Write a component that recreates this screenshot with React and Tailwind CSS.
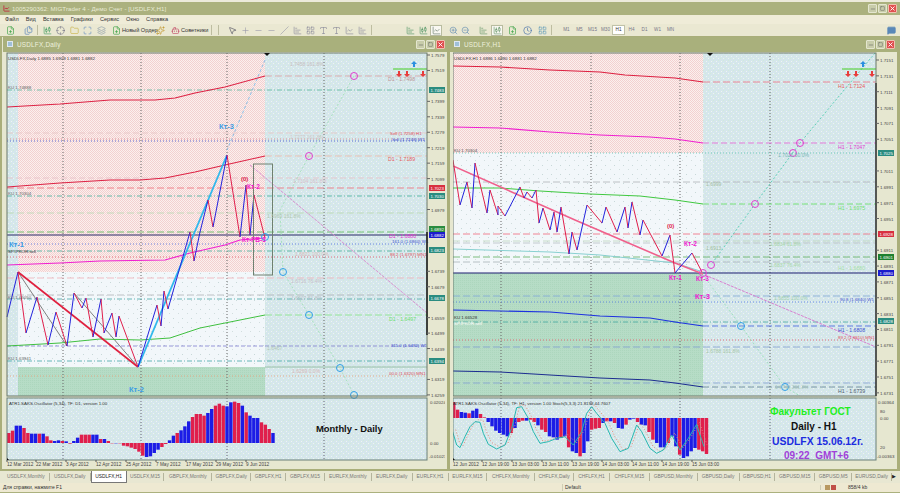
import React from 'react';
import { FilePlus, Files, Crosshair, Folder, Maximize, Layers, Sparkles, Bot, MousePointer2, Plus, Minus, Slash, Type, ChartCandlestick, ChartBar, ChartLine, ZoomIn, ZoomOut, Clock, LayoutGrid, MessageSquare, Minus as Dash, Square, X } from 'lucide-react';

const FONT = '"Liberation Sans", Arial, sans-serif';
const BLUE = '#2222dd';
const RED = '#e01f4c';

// small line helpers, coordinates below are page pixels
const HL = ({ y, c, d, x1 = 7, x2 = 427, w = 1 }) => (
  <line x1={x1} x2={x2} y1={y} y2={y} stroke={c} strokeWidth={w} strokeDasharray={d} opacity={d ? 0.8 : 1} />
);
const PL = ({ p, c, w = 1, d }) => (
  <polyline points={p} fill="none" stroke={c} strokeWidth={w} strokeDasharray={d} strokeLinejoin="round" />
);
const T = ({ x, y, c = '#444', s = 4.4, b, t }) => (
  <text x={x} y={y} fill={c} fontSize={s} fontWeight={b ? 700 : 400} fontFamily={FONT}>{t}</text>
);
const Ring = ({ x, y, c, r = 3.5 }) => <circle cx={x} cy={y} r={r} fill="none" stroke={c} strokeWidth="1" />;
const Tag = ({ x, y, c, t }) => (
  <g>
    <rect x={x} y={y - 3} width="16" height="6" fill={c} />
    <T x={x + 1.5} y={y + 1.8} c="#fff" t={t} />
  </g>
);

const Zig = ({ pts }) =>
  pts.slice(1).map((p, i) => (
    <line key={i} x1={pts[i][0]} y1={pts[i][1]} x2={p[0]} y2={p[1]} strokeWidth="1"
      stroke={p[1] < pts[i][1] ? BLUE : RED} />
  ));

const Patterns = ({ id }) => (
  <defs>
    <pattern id={id + 'pink'} width="2" height="2" patternUnits="userSpaceOnUse">
      <rect width="2" height="2" fill="#fbf0ee" />
      <rect width="1" height="1" fill="#f3d0d0" />
      <rect x="1" y="1" width="1" height="1" fill="#f3d0d0" />
    </pattern>
    <pattern id={id + 'sky'} width="5" height="5" patternUnits="userSpaceOnUse">
      <rect width="5" height="5" fill="#d5e6ec" />
      <rect x="1" y="1" width="1" height="1" fill="#eef6f0" />
      <rect x="3" y="0" width="1" height="1" fill="#d2ecd8" />
      <rect x="0" y="3" width="1" height="1" fill="#d2ecd8" />
      <rect x="3" y="3" width="1" height="1" fill="#eef6f0" />
    </pattern>
    <pattern id={id + 'pale'} width="9" height="9" patternUnits="userSpaceOnUse">
      <rect width="9" height="9" fill="#f2f7fa" />
      <rect x="2" y="3" width="1" height="1" fill="#c8d8d8" />
      <rect x="7" y="7" width="1" height="1" fill="#d2dede" />
    </pattern>
    <pattern id={id + 'grn'} width="2" height="2" patternUnits="userSpaceOnUse">
      <rect width="2" height="2" fill="#b6dcc6" />
      <rect width="1" height="1" fill="#acd6bd" />
    </pattern>
  </defs>
);

const Arrows = ({ x }) => (
  <g>
    <line x1={x} x2={x + 34} y1="69" y2="69" stroke="#44cc22" strokeWidth="1.2" />
    <path d={`M${x + 21} 61 l3 3 h-2 v3 h-2 v-3 h-2 z`} fill="#2b8fe0" />
    {[6, 14, 30].map(o => (
      <path key={o} d={`M${x + o} 77 l3 -3 h-2 v-3 h-2 v3 h-2 z`} fill="#e83c3c" />
    ))}
  </g>
);

const Bars = ({ data, x0, zero, step = 3.83 }) =>
  data.map(([h, c], i) => (
    <rect key={i} x={x0 + i * step} width={step - 0.4} y={h > 0 ? zero - h / 3 : zero} height={Math.abs(h) / 3}
      fill={c === 'b' ? '#1c1ce6' : '#e01f4c'} />
  ));

const dailyBars = [[30,'r'],[37,'r'],[52,'b'],[52,'b'],[45,'r'],[30,'r'],[28,'b'],[28,'b'],[28,'r'],[28,'b'],[20,'r'],[8,'r'],[6,'b'],[8,'b'],[6,'r'],[5,'b'],[-2,'r'],[6,'b'],[16,'b'],[25,'r'],[25,'r'],[25,'r'],[25,'b'],[25,'b'],[12,'r'],[12,'b'],[6,'r'],[-1,'r'],[-1,'b'],[-1,'r'],[-8,'r'],[-10,'r'],[-14,'r'],[-18,'r'],[-26,'r'],[-38,'r'],[-42,'b'],[-40,'b'],[-30,'b'],[-20,'b'],[-12,'r'],[-3,'r'],[8,'b'],[22,'b'],[30,'r'],[38,'b'],[50,'b'],[65,'b'],[78,'r'],[87,'r'],[87,'r'],[82,'r'],[90,'b'],[102,'b'],[112,'r'],[118,'r'],[112,'r'],[110,'b'],[122,'b'],[124,'r'],[120,'r'],[112,'b'],[92,'r'],[82,'b'],[75,'b'],[75,'b'],[62,'r'],[55,'r'],[42,'r'],[30,'b']];

const hourBars = [[48,'r'],[25,'r'],[18,'b'],[16,'b'],[14,'r'],[22,'b'],[28,'b'],[12,'r'],[2,'r'],[-12,'b'],[-25,'b'],[-38,'b'],[-45,'b'],[-50,'b'],[-55,'b'],[-45,'r'],[-30,'b'],[-12,'r'],[-8,'r'],[-8,'b'],[-5,'r'],[-12,'r'],[-22,'b'],[-35,'r'],[-42,'r'],[-55,'b'],[-58,'b'],[-65,'b'],[-60,'r'],[-55,'b'],[-88,'r'],[-100,'b'],[-105,'b'],[-115,'r'],[-105,'b'],[-70,'b'],[-35,'r'],[-32,'r'],[-30,'r'],[-15,'b'],[-10,'r'],[-10,'b'],[-15,'r'],[-30,'b'],[-32,'b'],[-20,'r'],[-5,'b'],[-2,'b'],[-12,'r'],[-20,'b'],[-22,'b'],[-42,'r'],[-65,'r'],[-75,'b'],[-88,'b'],[-88,'b'],[-75,'r'],[-55,'b'],[-85,'b'],[-110,'r'],[-120,'b'],[-115,'b'],[-100,'b'],[-90,'b'],[-95,'r'],[-100,'r'],[-108,'r']];

const dailyZig = [[7,317],[18,272],[26,333],[37,297],[48,345],[56,312],[67,346],[74,293],[82,308],[86,298],[93,337],[101,299],[104,333],[112,313],[116,337],[119,316],[138,367],[157,305],[161,326],[164,291],[168,309],[190,232],[194,261],[200,232],[208,200],[213,227],[227,155],[240,237],[246,185],[250,235],[254,195],[265,238]];

const hourZig = [[453,160],[460,205],[467,182],[472,208],[475,163],[487,213],[490,190],[498,215],[498,206],[505,216],[520,187],[524,198],[527,192],[532,198],[536,190],[539,223],[543,208],[550,230],[554,212],[557,232],[561,207],[569,254],[572,232],[577,250],[587,205],[602,223],[606,207],[617,232],[625,207],[628,228],[632,202],[640,235],[643,220],[662,256],[670,235],[675,273],[692,253],[702,272]];

const stochPts = [[8,110],[20,150],[30,158],[45,125],[60,95],[75,80],[90,82],[100,115],[115,148],[140,162],[165,150],[185,100],[200,38],[215,35],[235,70],[250,110],[270,145],[295,140],[320,130],[345,125],[370,150],[395,110],[410,55],[425,35],[440,55],[465,85],[485,130],[510,170],[535,160],[560,90],[575,110],[600,160],[620,175],[640,165],[665,120],[690,165],[715,130],[740,88],[750,120],[762,155]];
const stoch = stochPts.map(([x, y]) => `${450 + x / 3},${395 + y / 3}`).join(' ');
const stochSignal = stochPts.map(([x, y]) => `${453 + x / 3},${393 + y / 3}`).join(' ');

const dailyDates = [['12 Mar 2012',7],['22 Mar 2012',36],['3 Apr 2012',66],['12 Apr 2012',96],['25 Apr 2012',126],['7 May 2012',156],['17 May 2012',186],['29 May 2012',216],['9 Jun 2012',246]];
const hourDates = [['12 Jun 2012',453],['12 Jun 19:00',482],['13 Jun 03:00',512],['13 Jun 11:00',542],['13 Jun 19:00',572],['14 Jun 03:00',602],['14 Jun 11:00',632],['14 Jun 19:00',662],['15 Jun 03:00',692]];

// current price tags, they sit on top of the axis labels
const dailyTags = [[90,'#2a8c80','1.7483'],[188,'#d83040','1.7023'],[196,'#2a8c80','1.7030'],[229,'#2a8c40','1.6892'],[235,'#1c1ccc','1.6882'],[250,'#2a8c80','1.6823'],[298,'#2a8c80','1.6678'],[361,'#2a8c80','1.6394']];
const hourTags = [[153,'#2a8c80','1.7025'],[234,'#d83040','1.6928'],[257,'#1e8030','1.6901'],[273,'#1c1ccc','1.6880'],[321,'#2a8c80','1.6828']];
const clear = tags => ([, y]) => !tags.some(([ty]) => Math.abs(ty - (y - 2)) < 6);

const dailyPrices = Array.from({ length: 23 }, (_, i) => [(1.7579 - i * 0.006).toFixed(4), 57 + i * 15.45]).filter(clear(dailyTags));
const hourPrices = Array.from({ length: 22 }, (_, i) => [(1.7151 - i * 0.002).toFixed(4), 62 + i * 15.85]).filter(clear(hourTags));

const DailyChart = () => (
  <svg viewBox="6 52 439 417" width="439" height="417" className="block">
    <Patterns id="d" />
    <rect x="7" y="53" width="420" height="343" fill="url(#dsky)" />
    <rect x="18" y="53" width="247" height="219" fill="url(#dpink)" />
    <rect x="18" y="272" width="247" height="95" fill="url(#dpale)" />
    <rect x="18" y="367" width="247" height="29" fill="url(#dgrn)" />
    <rect x="7" y="398" width="420" height="62" fill="url(#dsky)" />

    {[63, 141, 227, 324].map(x => (
      <g key={x}>
        <line x1={x} x2={x} y1="53" y2="396" stroke="#666" strokeDasharray="1 2" />
        <line x1={x} x2={x} y1="398" y2="460" stroke="#667" strokeDasharray="1 2" />
      </g>
    ))}

    <HL y="90" c="#5cb8a0" d="5 2 1 2" />
    <HL y="133" c="#e8c4c4" d="6 3" />
    <HL y="139" c="#d8808c" d="1 2" />
    <HL y="141" c="#3c50d0" d="1 2" />
    <HL y="178" c="#e8c0c8" d="6 3" />
    <HL y="188" c="#f06c78" d="7 3" />
    <HL y="196" c="#44b09c" d="5 2 1 2" />
    <HL y="213" c="#b8d8b0" d="7 3" />
    <HL y="232" c="#58b858" d="7 3" />
    <HL y="235" c="#2a2a68" />
    <HL y="244" c="#4c6ce0" d="1 2" />
    <HL y="251" c="#44b09c" d="5 2 1 2" />
    <HL y="257" c="#e05060" d="1 2" />
    <HL y="278" c="#f0b0b8" d="7 3" />
    <HL y="295" c="#b0b4b8" d="7 3" />
    <HL y="299" c="#48a8a8" d="5 2 1 2" />
    <HL y="346" c="#8080d0" d="4 2" />
    <HL y="361" c="#44a8a8" d="5 2 1 2" />
    <HL y="367" c="#98c0a8" x1="265" />
    <HL y="376" c="#e8a078" d="1 2" />

    <PL p="265,60 227,150" c="#8cc0e8" d="3 2" />
    <PL p="354,76 309,156 280,210 283,272 309,315 340,368 354,395" c="#a8e0c0" d="2 2" />
    <PL p="250,165 427,313" c="#d890d0" d="3 1" />
    <PL p="18,272 67,346" c="#808080" />
    <PL p="74,293 138,367" c="#808080" />

    <PL p="7,107 60,104 110,100 155,100 175,98 195,93 225,87 265,76" c="#dd2244" w="1.1" />
    <HL y="76" x1="265" c="#d8a0a0" d="7 3" />
    <PL p="7,187 60,183 110,180 140,180 165,178 195,172 225,165 265,156" c="#dd2244" w="1.1" />
    <HL y="156" x1="265" c="#ecb8a8" d="7 3" />
    <PL p="7,265 60,263 100,261 165,260 190,253 225,245 240,240 265,238" c="#f020d0" w="1.1" />
    <PL p="7,346 60,343 100,339 140,340 170,338 200,328 225,323 265,315" c="#40c040" w="1" />
    <HL y="315" x1="265" c="#88e888" d="7 3" />

    <PL p="18,272 138,367" c="#e0203f" w="1.6" />
    <PL p="138,367 227,155" c="#30b8ec" w="1.8" />
    <Zig pts={dailyZig} />
    <rect x="253.5" y="164" width="19" height="111" fill="none" stroke="#708070" />

    <Ring x="354" y="76" c="#e040d0" />
    <Ring x="309" y="156" c="#e040d0" />
    {[[265, 237], [283, 272], [309, 315], [340, 368], [354, 395]].map(([x, y]) => (
      <Ring key={x} x={x} y={y} c="#30a0e8" />
    ))}
    <Arrows x={393} />

    <T x="8" y="60" c="#333" t="USDLFX,Daily  1.6885 1.6909 1.6881 1.6882" />
    <T x="8" y="89" c="#666" t="KU 1.74888" />
    <T x="8" y="195" c="#666" t="KU 1.70304" />
    <T x="8" y="299" c="#666" t="KU 1.65050" />
    <T x="8" y="360" c="#666" t="KU 1.63941" />
    <T x="219" y="129" c="#3c9ce4" s="7.5" b t="Кт-3" />
    <T x="129" y="392" c="#3c9ce4" s="7.5" b t="Кт-2" />
    <T x="9" y="247" c="#3c9ce4" s="7.5" b t="Кт-1" />
    <T x="8" y="253" c="#333" s="4.4" t="SP.IPKOR.sell" />
    <T x="241" y="181" c="#e01f4c" s="6" b t="(0)" />
    <T x="247" y="189" c="#f020d0" s="6.5" b t="Кт-2" />
    <T x="242" y="242" c="#f020d0" s="6.5" b t="Кт-FВ-3" />

    <T x="290" y="66" c="#c8c0c0" s="5" t="1.7458  161.8%" />
    <T x="290" y="139" c="#d0c8c8" s="5" t="1.7277  161.8%" />
    <T x="293" y="183" c="#d8c0c8" s="5" t="1.7104  161.8%" />
    <T x="267" y="218" c="#b0c8b0" s="5" t="1.6969  161.8%" />
    <T x="295" y="256" c="#d8b8b8" s="5" t="1.6821  100.0%" />
    <T x="291" y="283" c="#c8c0c8" s="5" t="1.6716  76.4%" />
    <T x="291" y="300" c="#b8c0c8" s="5" t="1.6607  61.8%" />
    <T x="267" y="350" c="#b0c8b8" s="5" t="1.6467" />
    <T x="292" y="373" c="#d8b8b8" s="5" t="1.6269  0.0%" />

    <T x="388" y="81" c="#c09898" s="5.2" t="D1 - 1.7498" />
    <T x="388" y="161" c="#e86060" s="5.2" t="D1 - 1.7189" />
    <T x="390" y="135" c="#e05060" t="Sell (1.7258) H1" />
    <T x="392" y="140.5" c="#3c50d0" t="Sell (1.7248) W1" />
    <T x="389" y="238" c="#e030d0" s="5.2" t="D1 - 1.6880" />
    <T x="392" y="243" c="#3c50d0" t="161.0 (1.6860) W1" />
    <T x="390" y="256" c="#e05060" t="88.2 (1.6797) MN1" />
    <T x="389" y="321" c="#70e070" s="5.2" t="D1 - 1.6497" />
    <T x="391" y="347" c="#3c50d0" t="311.0 (1.6482) W1" />
    <T x="389" y="375" c="#e05060" t="00.0 (1.6320) MN1" />

    <rect x="7" y="53" width="420" height="343" fill="none" stroke="#6a786a" />
    <line x1="427" x2="427" y1="232" y2="335" stroke="#111" strokeWidth="1.4" />
    <path d="M264 53 h6 l-3 3 z" fill="#111" />

    {dailyPrices.map(([t, y]) => (
      <g key={t}>
        <line x1="427" x2="430" y1={y - 2} y2={y - 2} stroke="#666" />
        <T x="431" y={y} t={t} />
      </g>
    ))}
    {dailyTags.map(([y, c, t]) => <Tag key={y} x={429} y={y} c={c} t={t} />)}

    <Bars data={dailyBars} x0={7} zero={443} />
    <rect x="7" y="398" width="420" height="62" fill="none" stroke="#6a8078" />
    <T x="9" y="405" c="#333" t="ATR1.SAKS.Oscillator (5,34), TF: D1, version 1.00" />
    <text x="316" y="432" fontSize="9.4" fontWeight="700" fill="#111" fontFamily={FONT}>Monthly - Daily</text>
    <T x="430" y="404" t="0.02024" />
    <T x="430" y="445" t="0.00" />
    <T x="429" y="458" t="-0.01023" />
    <path d="M7 458 l2 2 h-2 z" fill="#111" />

    {dailyDates.map(([t, x]) => (
      <g key={t}>
        <line x1={x} x2={x} y1="460" y2="462" stroke="#555" />
        <T x={x} y="466" s="4.7" t={t} />
      </g>
    ))}
  </svg>
);

const HourChart = () => (
  <svg viewBox="453 52 442 417" width="442" height="417" className="block">
    <Patterns id="h" />
    <rect x="453" y="53" width="423" height="343" fill="url(#hsky)" />
    <rect x="453" y="53" width="250" height="100" fill="url(#hpink)" />
    <rect x="453" y="153" width="250" height="120" fill="url(#hpale)" />
    <rect x="453" y="273" width="250" height="123" fill="url(#hgrn)" />
    <rect x="453" y="398" width="423" height="62" fill="url(#hsky)" />

    {[501, 591, 680, 770].map(x => (
      <g key={x}>
        <line x1={x} x2={x} y1="53" y2="396" stroke="#666" strokeDasharray="1 2" />
        <line x1={x} x2={x} y1="398" y2="460" stroke="#667" strokeDasharray="1 2" />
      </g>
    ))}

    <HL x1="453" x2="876" y="153" c="#58c0b0" d="1 2" />
    <HL x1="453" x2="876" y="182" c="#b0b4b8" d="7 3" />
    <HL x1="453" x2="876" y="234" c="#f0687c" d="7 3" />
    <HL x1="453" x2="876" y="241" c="#c0d8c0" d="7 3" />
    <HL x1="453" x2="876" y="243" c="#b8c0c4" d="7 3" />
    <HL x1="453" x2="876" y="257" c="#60b060" d="7 3" />
    <HL x1="453" x2="876" y="262" c="#a8b4b8" d="7 3" />
    <HL x1="453" x2="876" y="273" c="#1c1c70" w="1.2" />
    <HL x1="453" x2="876" y="296" c="#80a8d8" d="7 3" />
    <HL x1="453" x2="876" y="302" c="#4c78e0" d="1 2" />
    <HL x1="453" x2="876" y="322" c="#44a8a0" d="5 2 1 2" />
    <HL x1="453" x2="876" y="340" c="#e85060" d="1 2" />
    <HL x1="453" x2="876" y="347" c="#80a0d0" d="7 3" />
    <HL x1="453" x2="876" y="383" c="#80a0d0" d="7 3" />

    <PL p="453,66 500,67 550,70 600,72 625,75 675,78 703,82" c="#dd1f40" w="1.1" />
    <HL x1="703" x2="876" y="82" c="#f07080" d="7 3" />
    <PL p="453,127 500,128 550,132 600,135 650,137 675,139 703,143" c="#f020d0" w="1.1" />
    <HL x1="703" x2="876" y="143" c="#e860d8" d="6 3" />
    <PL p="453,188 500,188 540,191 590,194 640,196 675,200 703,204" c="#40c840" w="1" />
    <HL x1="703" x2="876" y="204" c="#60e060" d="6 3" />
    <PL p="453,249 550,252 600,255 675,263 700,271" c="#88d0d0" w="1" />
    <PL p="453,310 500,311 550,312 600,316 650,318 675,322 703,326" c="#1c30e0" w="1.1" />
    <HL x1="703" x2="876" y="326" c="#4060e0" d="6 3" />
    <PL p="453,371 500,372 550,375 600,378 650,380 675,383 703,387" c="#1c2c90" w="1" />
    <HL x1="703" x2="876" y="387" c="#608090" d="6 3" />

    <PL p="875,53 800,143 755,204 711,265" c="#60d0b8" d="2 2" />
    <PL p="703,275 741,326 785,387 800,396" c="#a0e0c0" d="2 2" />
    <PL p="705,275 876,347" c="#d880d0" d="3 1" />

    <PL p="453,166 575,220 675,263 703,274" c="#f0608c" w="1.6" />
    <Zig pts={hourZig} />

    {[[800, 143], [793, 153], [755, 204], [711, 265], [703, 273]].map(([x, y]) => (
      <Ring key={x} x={x} y={y} c="#e040d0" />
    ))}
    <Ring x="741" y="326" c="#30a0e8" />
    <Ring x="785" y="387" c="#30a0e8" />
    <Arrows x={842} />

    <T x="454" y="60" c="#333" t="USDLFX,H1  1.6886 1.6890 1.6881 1.6882" />
    <T x="454" y="152" c="#555" t="KU 1.70304" />
    <T x="454" y="319" c="#333" t="KU 1.66528" />
    <T x="454" y="324.5" c="#fff" t="SP.IPKOR.sell" />
    <T x="667" y="228" c="#e01f4c" s="6" b t="(0)" />
    <T x="684" y="246" c="#f020d0" s="6.5" b t="Кт-2" />
    <T x="669" y="280" c="#f020d0" s="6.5" b t="Кт-1" />
    <T x="696" y="281" c="#f020d0" s="6.5" b t="Кт-3" />
    <T x="695" y="299" c="#f020d0" s="7.5" b t="Кт-3" />

    <T x="778" y="157" c="#78b8b8" s="5" t="1.7025  50.0%" />
    <T x="706" y="186" c="#a8c0a8" s="5" t="1.6999" />
    <T x="706" y="250" c="#a0c0a0" s="5" t="1.6913" />
    <T x="770" y="246" c="#a8d8a8" s="5" t="1.6834  61.8%" />
    <T x="770" y="267" c="#a8d8a8" s="5" t="1.6837  76.4%" />
    <T x="774" y="300" c="#a0d0b0" s="5" t="1.6855  100.0%" />
    <T x="706" y="353" c="#a8c8a8" s="5" t="1.6788  161.8%" />
    <T x="775" y="389" c="#a8c8c0" s="5" t="1.6749  261.8%" />

    <T x="838" y="88" c="#e86060" s="5.2" t="H1 - 1.7124" />
    <T x="838" y="149" c="#e040d0" s="5.2" t="H1 - 1.7047" />
    <T x="838" y="210" c="#70e070" s="5.2" t="H1 - 1.6975" />
    <T x="838" y="270" c="#a8e0a8" s="5.2" t="H1 - 1.6880" />
    <T x="840" y="301" c="#3c50d0" t="90.8 (1.6840) W1" />
    <T x="838" y="332" c="#3c50d0" s="5.2" t="H1 - 1.6808" />
    <T x="838" y="339" c="#e05060" t="89.2 (1.6810) MN1" />
    <T x="838" y="393" c="#506070" s="5.2" t="H1 - 1.6739" />

    <rect x="453" y="53" width="423" height="343" fill="none" stroke="#6a786a" />
    <line x1="876" x2="876" y1="83" y2="396" stroke="#333" strokeWidth="1.4" />
    <path d="M707 53 h6 l-3 3 z" fill="#111" />

    {hourPrices.map(([t, y]) => (
      <g key={t}>
        <line x1="876" x2="879" y1={y - 2} y2={y - 2} stroke="#666" />
        <T x="880" y={y} t={t} />
      </g>
    ))}
    {hourTags.map(([y, c, t]) => <Tag key={y} x={878} y={y} c={c} t={t} />)}

    <Bars data={hourBars} x0={452} zero={418} />
    <PL p={stochSignal} c="#e88878" d="1 2" />
    <PL p={stoch} c="#28b8b0" w="1" />
    <rect x="453" y="398" width="423" height="62" fill="none" stroke="#6a8078" />
    <T x="453" y="405" c="#333" t="ATR1.SAKS.Oscillator (5,34), TF: H1, version 1.00  Stoch(5,3,3) 21.8198 44.7607" />
    <text x="770" y="415" fontSize="10" fontWeight="700" fill="#22ee22" fontFamily={FONT}>Факультет ГОСТ</text>
    <text x="791" y="430" fontSize="10" fontWeight="700" fill="#111" fontFamily={FONT}>Daily - H1</text>
    <text x="772" y="445" fontSize="10.4" fontWeight="700" fill="#1c2ce0" fontFamily={FONT}>USDLFX 15.06.12г.</text>
    <text x="784" y="459" fontSize="10" fontWeight="700" fill="#a040d8" fontFamily={FONT} xmlSpace="preserve">09:22  GMT+6</text>
    <T x="878" y="404" t="0.00364" />
    <T x="880" y="413" t="80" />
    <T x="880" y="420" t="0.00" />
    <T x="880" y="449" t="20" />
    <T x="877" y="458" t="-0.00363" />
    <path d="M453 458 l2 2 h-2 z" fill="#111" />

    {hourDates.map(([t, x]) => (
      <g key={t}>
        <line x1={x} x2={x} y1="460" y2="462" stroke="#555" />
        <T x={x} y="466" s="4.7" t={t} />
      </g>
    ))}
  </svg>
);

const WinButtons = () => (
  <div className="flex gap-[1px]">
    <span className="w-[9px] h-[9px] flex items-center justify-center bg-[#c8ccaa] border border-[#e4e6cf] rounded-[1px]"><Dash size={6} color="#555" /></span>
    <span className="w-[9px] h-[9px] flex items-center justify-center bg-[#c8ccaa] border border-[#e4e6cf] rounded-[1px]"><Square size={5} color="#555" /></span>
    <span className="w-[9px] h-[9px] flex items-center justify-center bg-[#e05050] border border-[#f0c0b0] rounded-[1px]"><X size={7} color="#fff" strokeWidth={3} /></span>
  </div>
);

const ChartWindow = ({ title, pad, width, children }) => (
  <div className={`${width} ${pad} flex flex-col bg-[#e6e7d0] border-b border-[#a9ae7a]`}>
    <div className="h-[15px] -ml-[3px] -mr-[2px] flex items-center justify-between pl-[4px] pr-[2px] bg-[#a9b07c] text-[#eef0dc]">
      <div className="flex items-center gap-[4px]">
        <span className="w-[6px] h-[6px] border border-[#dfe8f0] bg-[#9fc0d8]" />
        <span className="text-[6.4px] tracking-[0.2px]">{title}</span>
      </div>
      <WinButtons />
    </div>
    {children}
  </div>
);

const Tool = ({ icon: Icon, c = '#667', active, className = '' }) => (
  <span className={`w-[12px] h-[11px] shrink-0 flex items-center justify-center ${active ? 'bg-white/70 border border-[#b8bca0]' : ''} ${className}`}>
    <Icon size={9} color={c} strokeWidth={1.6} />
  </span>
);
const Sep = () => <span className="w-[1px] h-[10px] mx-[3px] shrink-0 bg-[#bdbda0]" />;

const periods = ['M1', 'M5', 'M15', 'M30', 'H1', 'H4', 'D1', 'W1', 'MN'];
const menu = ['Файл', 'Вид', 'Вставка', 'Графики', 'Сервис', 'Окно', 'Справка'];
const tabs = [['USDLFX,Monthly',47],['USDLFX,Daily',41],['USDLFX,H1',36],['USDLFX,M15',38],['GBPLFX,Monthly',48],['GBPLFX,Daily',39],['GBPLFX,H1',35],['GBPLFX,M15',39],['EURLFX,Monthly',47],['EURLFX,Daily',41],['EURLFX,H1',36],['EURLFX,M15',39],['CHFLFX,Monthly',48],['CHFLFX,Daily',39],['CHFLFX,H1',36],['CHFLFX,M15',40],['GBPUSD,Monthly',48],['GBPUSD,Daily',42],['GBPUSD,H1',36],['GBPUSD,M15',40],['GBPUSD,M5',37],['EURUSD,Daily',40]];

export default function App() {
  return (
    <div className="w-[900px] h-[493px] overflow-hidden flex flex-col bg-[#ece9d6] text-[#333]" style={{ fontFamily: FONT }}>
      {/* Title bar */}
      <div className="h-[2px] bg-[#eceadb]" />
      <div className="h-[13px] flex items-center justify-between pl-[3px] pr-[3px] bg-[#abb17e] text-[#e8ebd4]">
        <div className="flex items-center gap-[2px]">
          <ChartLine size={7} color="#c03040" strokeWidth={3} />
          <span className="text-[6.2px] tracking-[0.05px]">1005290362: MIGTrader 4 - Демо Счет - [USDLFX,H1]</span>
        </div>
        <WinButtons />
      </div>

      {/* Menu */}
      <div className="h-[9px] flex items-center pl-[5px] gap-[7px] text-[5.6px] text-[#333] bg-[#efecd8]">
        {menu.map(m => <span key={m}>{m}</span>)}
      </div>

      {/* Toolbar */}
      <div className="h-[12px] flex items-center pl-[4px] text-[5.6px] bg-[#eae8d2]">
        <Tool icon={FilePlus} c="#2e9e3a" />
        <Tool icon={Files} c="#4a78b8" className="ml-[6px]" />
        <Sep />
        <div className="flex gap-[1.5px]">
          <Tool icon={ChartCandlestick} c="#3a9a5a" />
          <Tool icon={Crosshair} c="#778" />
          <Tool icon={Folder} c="#c8b040" />
          <Tool icon={Maximize} c="#5a88c0" />
          <Tool icon={Layers} c="#8898a8" />
        </div>
        <Tool icon={FilePlus} c="#2e9e3a" className="ml-[3px]" />
        <span className="w-[32px] shrink-0 whitespace-nowrap">Новый Ордер</span>
        <Tool icon={Sparkles} c="#c09020" />
        <Tool icon={Bot} c="#c04060" className="ml-[3px]" />
        <span className="w-[27px] shrink-0 whitespace-nowrap">Советники</span>
        <Sep />
        <Sep />
        <div className="flex gap-[1px] ml-[4px]">
          <Tool icon={MousePointer2} c="#445" />
          <Tool icon={Plus} c="#99a" />
          <Tool icon={Minus} c="#99a" />
          <Tool icon={Minus} c="#99a" />
          <Tool icon={Slash} c="#99a" />
          <Tool icon={ChartBar} c="#889" />
          <Tool icon={LayoutGrid} c="#889" />
          <Tool icon={Type} c="#889" />
          <Tool icon={Type} c="#889" />
          <Tool icon={ChartLine} c="#889" />
          <Tool icon={ChartBar} c="#889" />
        </div>
        <Sep />
        <div className="flex gap-[1px] ml-[29px]">
          <Tool icon={ChartBar} c="#4a9060" />
          <Tool icon={ChartCandlestick} c="#4a9060" />
          <Tool icon={ChartLine} c="#5a7060" active />
        </div>
        <Tool icon={ZoomIn} c="#5a88b0" className="ml-[5px]" />
        <Tool icon={ZoomOut} c="#5a88b0" />
        <Tool icon={ChartBar} c="#5a9060" className="ml-[6px]" />
        <Tool icon={ChartCandlestick} c="#5a9060" active className="ml-[2px]" />
        <Tool icon={FilePlus} c="#2e9e3a" className="ml-[3px]" />
        <Tool icon={Clock} c="#3a68a8" className="ml-[3px]" />
        <Tool icon={LayoutGrid} c="#5a98b8" className="ml-[3px]" />
        <Sep />
        <div className="flex items-center ml-[5px] text-[4.6px] text-[#778]">
          {periods.map(p => (
            <span key={p} className={`w-[13px] h-[10px] flex items-center justify-center ${p === 'H1' ? 'bg-white border border-[#c0c2a8] text-[#333]' : ''}`}>{p}</span>
          ))}
        </div>
        <span className="ml-auto mr-[4px]"><MessageSquare size={9} color="#5a88b8" fill="#5a88b8" /></span>
      </div>

      {/* Chart windows */}
      <div className="h-[435px] flex items-start gap-[3px] pl-[2px] pt-[1px] bg-[#a9ae7a]">
        <ChartWindow title="USDLFX,Daily" pad="pl-[4px] pr-[2px]" width="w-[445px]">
          <DailyChart />
        </ChartWindow>
        <ChartWindow title="USDLFX,H1" pad="pl-[3px] pr-[2px]" width="w-[447px]">
          <HourChart />
        </ChartWindow>
      </div>

      {/* Tabs */}
      <div className="h-[12px] flex items-center pl-[3px] text-[4.9px] text-[#777] bg-[#e8e7d2]">
        {tabs.map(([t, w]) => (
          <span key={t} style={{ width: w }}
            className={t === 'USDLFX,H1'
              ? 'h-[12px] flex items-center justify-center bg-white border border-[#777] border-t-0 rounded-b-[1px] text-[#222] whitespace-nowrap'
              : 'h-[8px] flex items-center justify-center border-r border-[#b4b49c] whitespace-nowrap'}>
            {t}
          </span>
        ))}
        <span className="ml-auto mr-[4px] text-[5px] text-[#222]">▶</span>
      </div>

      {/* Status bar */}
      <div className="h-[9px] flex items-center text-[5px] text-[#333] bg-[#eee9d2]">
        <span className="w-[562px] pl-[3px]">Для справки, нажмите F1</span>
        <span className="w-[258px] pl-[2px] border-l border-[#cfcdb4]">Default</span>
        <span className="w-[24px] flex items-center gap-[1px] border-l border-[#cfcdb4] pl-[4px]">
          <span className="w-[5px] h-[5px] bg-[#b89860]" />
          <span className="w-[5px] h-[5px] bg-[#c05048]" />
        </span>
        <span className="pl-[4px]">858/4 kb</span>
      </div>
      <div className="flex-1 bg-[#abb17e]" />
    </div>
  );
}
